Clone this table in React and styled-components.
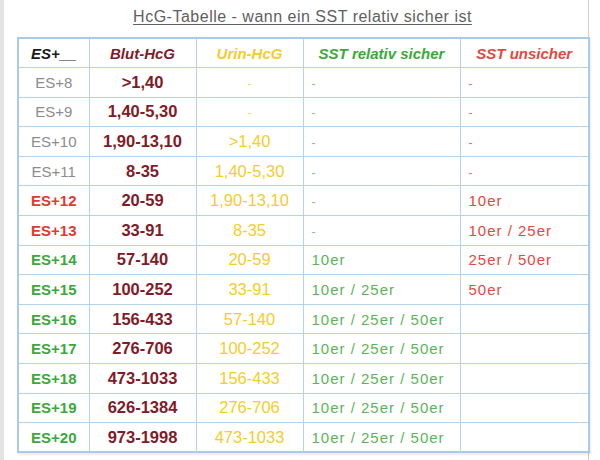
import styled, { createGlobalStyle } from "styled-components";

const GlobalStyle = createGlobalStyle`
  html, body {
    margin: 0;
    padding: 0;
    background: #ffffff;
  }
  body {
    font-family: "Liberation Sans", Arial, sans-serif;
  }
`;

const colors = {
  black: '#1a1a1a',
  gray: '#8c8c8c',
  red: '#e2392f',
  green: '#3aa93a',
  maroon: '#801b29',
  yellow: '#f4cd2b',
  softGreen: '#5cb459',
  softRed: '#e2493f',
  line: '#b3d3ec',
};

const Page = styled.div`
  width: 589px;
  height: 460px;
  border-left: 4px solid #e3e3e3;
  border-right: 1px solid #cfcfcf;
  padding: 6px 0 0 13px;
  box-sizing: border-box;
`;

const Title = styled.h1`
  margin: 0 0 10px 0;
  width: 571px;
  text-align: center;
  font-size: 16px;
  letter-spacing: 0.5px;
  font-weight: normal;
  color: #606060;
  text-decoration: underline;
  text-underline-offset: 2px;
  line-height: 21px;
`;

const Table = styled.table`
  width: 571px;
  border-collapse: collapse;
  table-layout: fixed;
  border: 2px solid #a9cbe8;
  box-shadow: 1px 2px 2px rgba(0, 0, 0, 0.08);

  tr {
    height: 29.6px;
  }
`;

const HeadCell = styled.th`
  border: 1.5px solid ${colors.line};
  padding: 0;
  font-size: 15px;
  font-weight: bold;
  font-style: italic;
  color: ${p => p.$color};
  text-align: center;
  white-space: nowrap;
`;

const Cell = styled.td`
  border: 1.5px solid ${colors.line};
  padding: 0 0 0 ${p => (p.$left ? '8px' : '0')};
  font-size: ${p => p.$size || 15}px;
  font-weight: ${p => (p.$bold ? 'bold' : 'normal')};
  letter-spacing: ${p => (p.$wide ? '1px' : '0')};
  color: ${p => p.$color};
  text-align: ${p => (p.$left ? 'left' : 'center')};
  white-space: nowrap;
`;

const Dash = styled.span`
  font-size: 12px;
  opacity: 0.8;
`;

const columns = [
  { label: 'ES+__', color: colors.black, width: 71 },
  { label: 'Blut-HcG', color: colors.maroon, width: 107 },
  { label: 'Urin-HcG', color: colors.yellow, width: 107 },
  { label: 'SST relativ sicher', color: colors.green, width: 157 },
  { label: 'SST unsicher', color: colors.softRed, width: 129 },
];

const rows = [
  ['ES+8', 'gray', '>1,40', '-', '-', '-'],
  ['ES+9', 'gray', '1,40-5,30', '-', '-', '-'],
  ['ES+10', 'gray', '1,90-13,10', '>1,40', '-', '-'],
  ['ES+11', 'gray', '8-35', '1,40-5,30', '-', '-'],
  ['ES+12', 'red', '20-59', '1,90-13,10', '-', '10er'],
  ['ES+13', 'red', '33-91', '8-35', '-', '10er / 25er'],
  ['ES+14', 'green', '57-140', '20-59', '10er', '25er / 50er'],
  ['ES+15', 'green', '100-252', '33-91', '10er / 25er', '50er'],
  ['ES+16', 'green', '156-433', '57-140', '10er / 25er / 50er', ''],
  ['ES+17', 'green', '276-706', '100-252', '10er / 25er / 50er', ''],
  ['ES+18', 'green', '473-1033', '156-433', '10er / 25er / 50er', ''],
  ['ES+19', 'green', '626-1384', '276-706', '10er / 25er / 50er', ''],
  ['ES+20', 'green', '973-1998', '473-1033', '10er / 25er / 50er', ''],
];

const show = (value) => (value === '-' ? <Dash>-</Dash> : value);

export default function App() {
  return (
    <>
      <GlobalStyle />
      <Page>
        <Title>HcG-Tabelle - wann ein SST relativ sicher ist</Title>
        <Table>
          <colgroup>
            {columns.map((col) => (
              <col key={col.label} style={{ width: col.width }} />
            ))}
          </colgroup>
          <thead>
            <tr>
              {columns.map((col) => (
                <HeadCell key={col.label} $color={col.color}>{col.label}</HeadCell>
              ))}
            </tr>
          </thead>
          <tbody>
            {rows.map(([es, tone, blut, urin, safe, unsafe]) => (
              <tr key={es}>
                <Cell $color={colors[tone]} $bold={tone !== 'gray'}>{es}</Cell>
                <Cell $color={colors.maroon} $bold $size={16.5}>{blut}</Cell>
                <Cell $color={colors.yellow} $size={16.5}>{show(urin)}</Cell>
                <Cell $color={colors.softGreen} $left $wide>{show(safe)}</Cell>
                <Cell $color={colors.softRed} $left $wide>{show(unsafe)}</Cell>
              </tr>
            ))}
          </tbody>
        </Table>
      </Page>
    </>
  );
}
